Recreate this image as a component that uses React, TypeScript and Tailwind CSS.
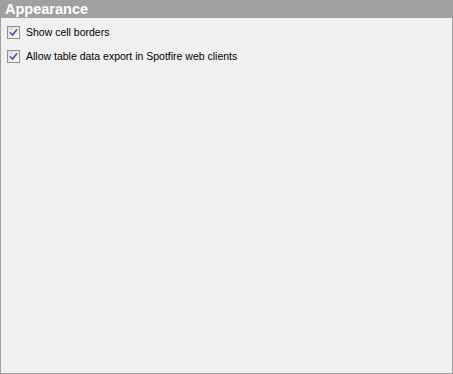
import React from "react";

function CheckBox() {
  return (
    <span className="flex h-[13px] w-[13px] shrink-0 items-center justify-center border border-[#8e8f8f] bg-gradient-to-br from-[#dcdcdc] to-[#fbfbfb]">
      <svg width="9" height="9" viewBox="0 0 9 9">
        <path
          d="M1 4.5 L3.5 7 L8 1.5"
          fill="none"
          stroke="#3f57a6"
          strokeWidth="1.7"
        />
      </svg>
    </span>
  );
}

const options = [
  "Show cell borders",
  "Allow table data export in Spotfire web clients",
];

export default function App() {
  return (
    <div
      className="flex h-[374px] w-[453px] flex-col"
      style={{ fontFamily: '"Liberation Sans", Arial, sans-serif' }}
    >
      <div className="h-[18px] shrink-0 bg-[#a0a0a0] pl-[5px] text-[14.5px] font-bold leading-[18px] text-white">
        Appearance
      </div>
      <div className="flex flex-1 flex-col gap-[11px] border-x border-b border-[#a0a0a0] bg-[#f0f0f0] pl-[6px] pt-[8px]">
        {options.map((o) => (
          <label key={o} className="flex items-center gap-[6px] text-[10.5px] leading-[13px] text-black">
            <CheckBox />
            <span>{o}</span>
          </label>
        ))}
      </div>
    </div>
  );
}
